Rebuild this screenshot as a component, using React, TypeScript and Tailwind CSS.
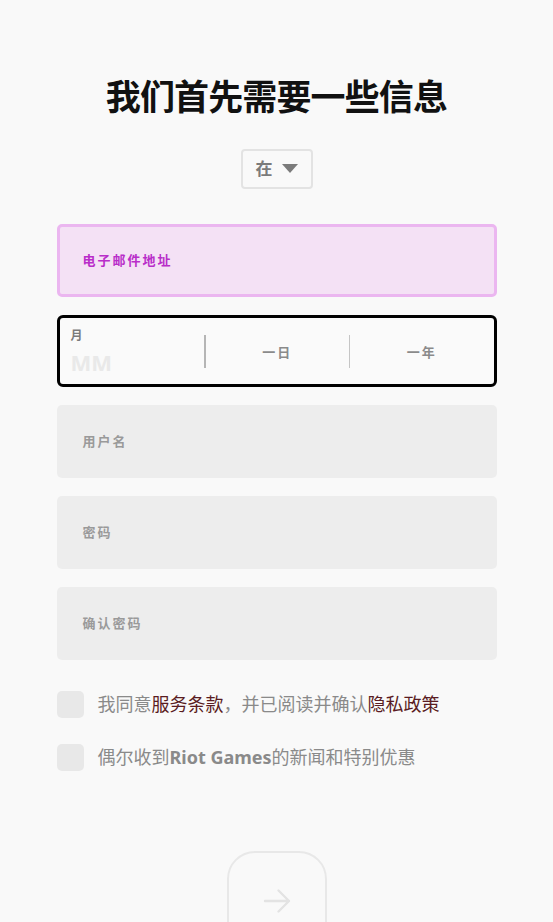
const font = { fontFamily: '"Noto Sans", "Noto Sans CJK SC", sans-serif' };

function Field({ label }: { label: string }) {
  return (
    <div className="flex h-[73px] items-center rounded-[5px] bg-[#ededed] px-[26px]">
      <span className="text-[13px] font-bold tracking-[2px] text-[#9a9a9a]">{label}</span>
    </div>
  );
}

function Check({ children }: { children: React.ReactNode }) {
  return (
    <div className="flex items-center gap-[14px]">
      <div className="h-[27px] w-[27px] shrink-0 rounded-[5px] bg-[#e8e8e8]" />
      <p className="text-[18px] text-[#8a8a8a]">{children}</p>
    </div>
  );
}

export default function App() {
  return (
    <main className="min-h-[922px] overflow-hidden bg-[#f9f9f9]" style={font}>
      <div className="mx-auto flex w-[440px] flex-col pt-[73px]">
        <h1 className="text-center text-[35px] font-bold leading-[48px] tracking-tight text-[#111111]">我们首先需要一些信息</h1>

        <div className="mt-[28px] flex justify-center">
          <div className="flex h-[40px] w-[72px] items-center justify-center gap-[9px] rounded-[4px] border-2 border-[#e3e3e3]">
            <span className="text-[17px] font-bold text-[#7b7b7b]">在</span>
            <svg width="16" height="10" viewBox="0 0 16 10"><path d="M0 0h16L8 9z" fill="#7b7b7b" /></svg>
          </div>
        </div>

        <div className="mt-[35px] flex h-[73px] items-center rounded-[5px] border-[3px] border-[#ebb6f0] bg-[#f4e1f5] px-[23px]">
          <span className="text-[13px] font-bold tracking-[2px] text-[#b92ec9]">电子邮件地址</span>
        </div>

        <div className="mt-[18px] flex h-[72px] items-center rounded-[6px] border-[3px] border-black bg-[#fafafa]">
          <div className="flex w-[144px] flex-col pl-[11px]">
            <span className="text-[12px] font-bold leading-[16px] text-[#7b7b7b]">月</span>
            <span className="mt-[6px] text-[22px] font-bold leading-[24px] text-[#e9e9e9]">MM</span>
          </div>
          <div className="h-[33px] w-[2px] bg-[#b5b5b5]" />
          <div className="flex flex-1 justify-center pt-[4px] text-[13px] font-bold tracking-[2px] text-[#8a8a8a]">一日</div>
          <div className="h-[33px] w-[1px] bg-[#c5c5c5]" />
          <div className="flex flex-1 justify-center pt-[4px] text-[13px] font-bold tracking-[2px] text-[#8a8a8a]">一年</div>
        </div>

        <div className="mt-[18px] flex flex-col gap-[18px]">
          <Field label="用户名" />
          <Field label="密码" />
          <Field label="确认密码" />
        </div>

        <div className="mt-[31px] flex flex-col gap-[26px]">
          <Check>
            我同意<span className="text-[#5a1c22]">服务条款</span>，并已阅读并确认<span className="text-[#5a1c22]">隐私政策</span>
          </Check>
          <Check>
            偶尔收到<span className="font-bold">Riot Games</span>的新闻和特别优惠
          </Check>
        </div>

        <div className="mt-[80px] flex justify-center">
          <div className="flex h-[100px] w-[100px] items-center justify-center rounded-[28px] border-2 border-[#e8e8e8]">
            <svg width="36" height="36" viewBox="0 0 24 24" fill="none" stroke="#e3e3e3" strokeWidth="1.6" strokeLinecap="round" strokeLinejoin="round">
              <path d="M4 12h16M13 5l7 7-7 7" />
            </svg>
          </div>
        </div>
      </div>
    </main>
  );
}
